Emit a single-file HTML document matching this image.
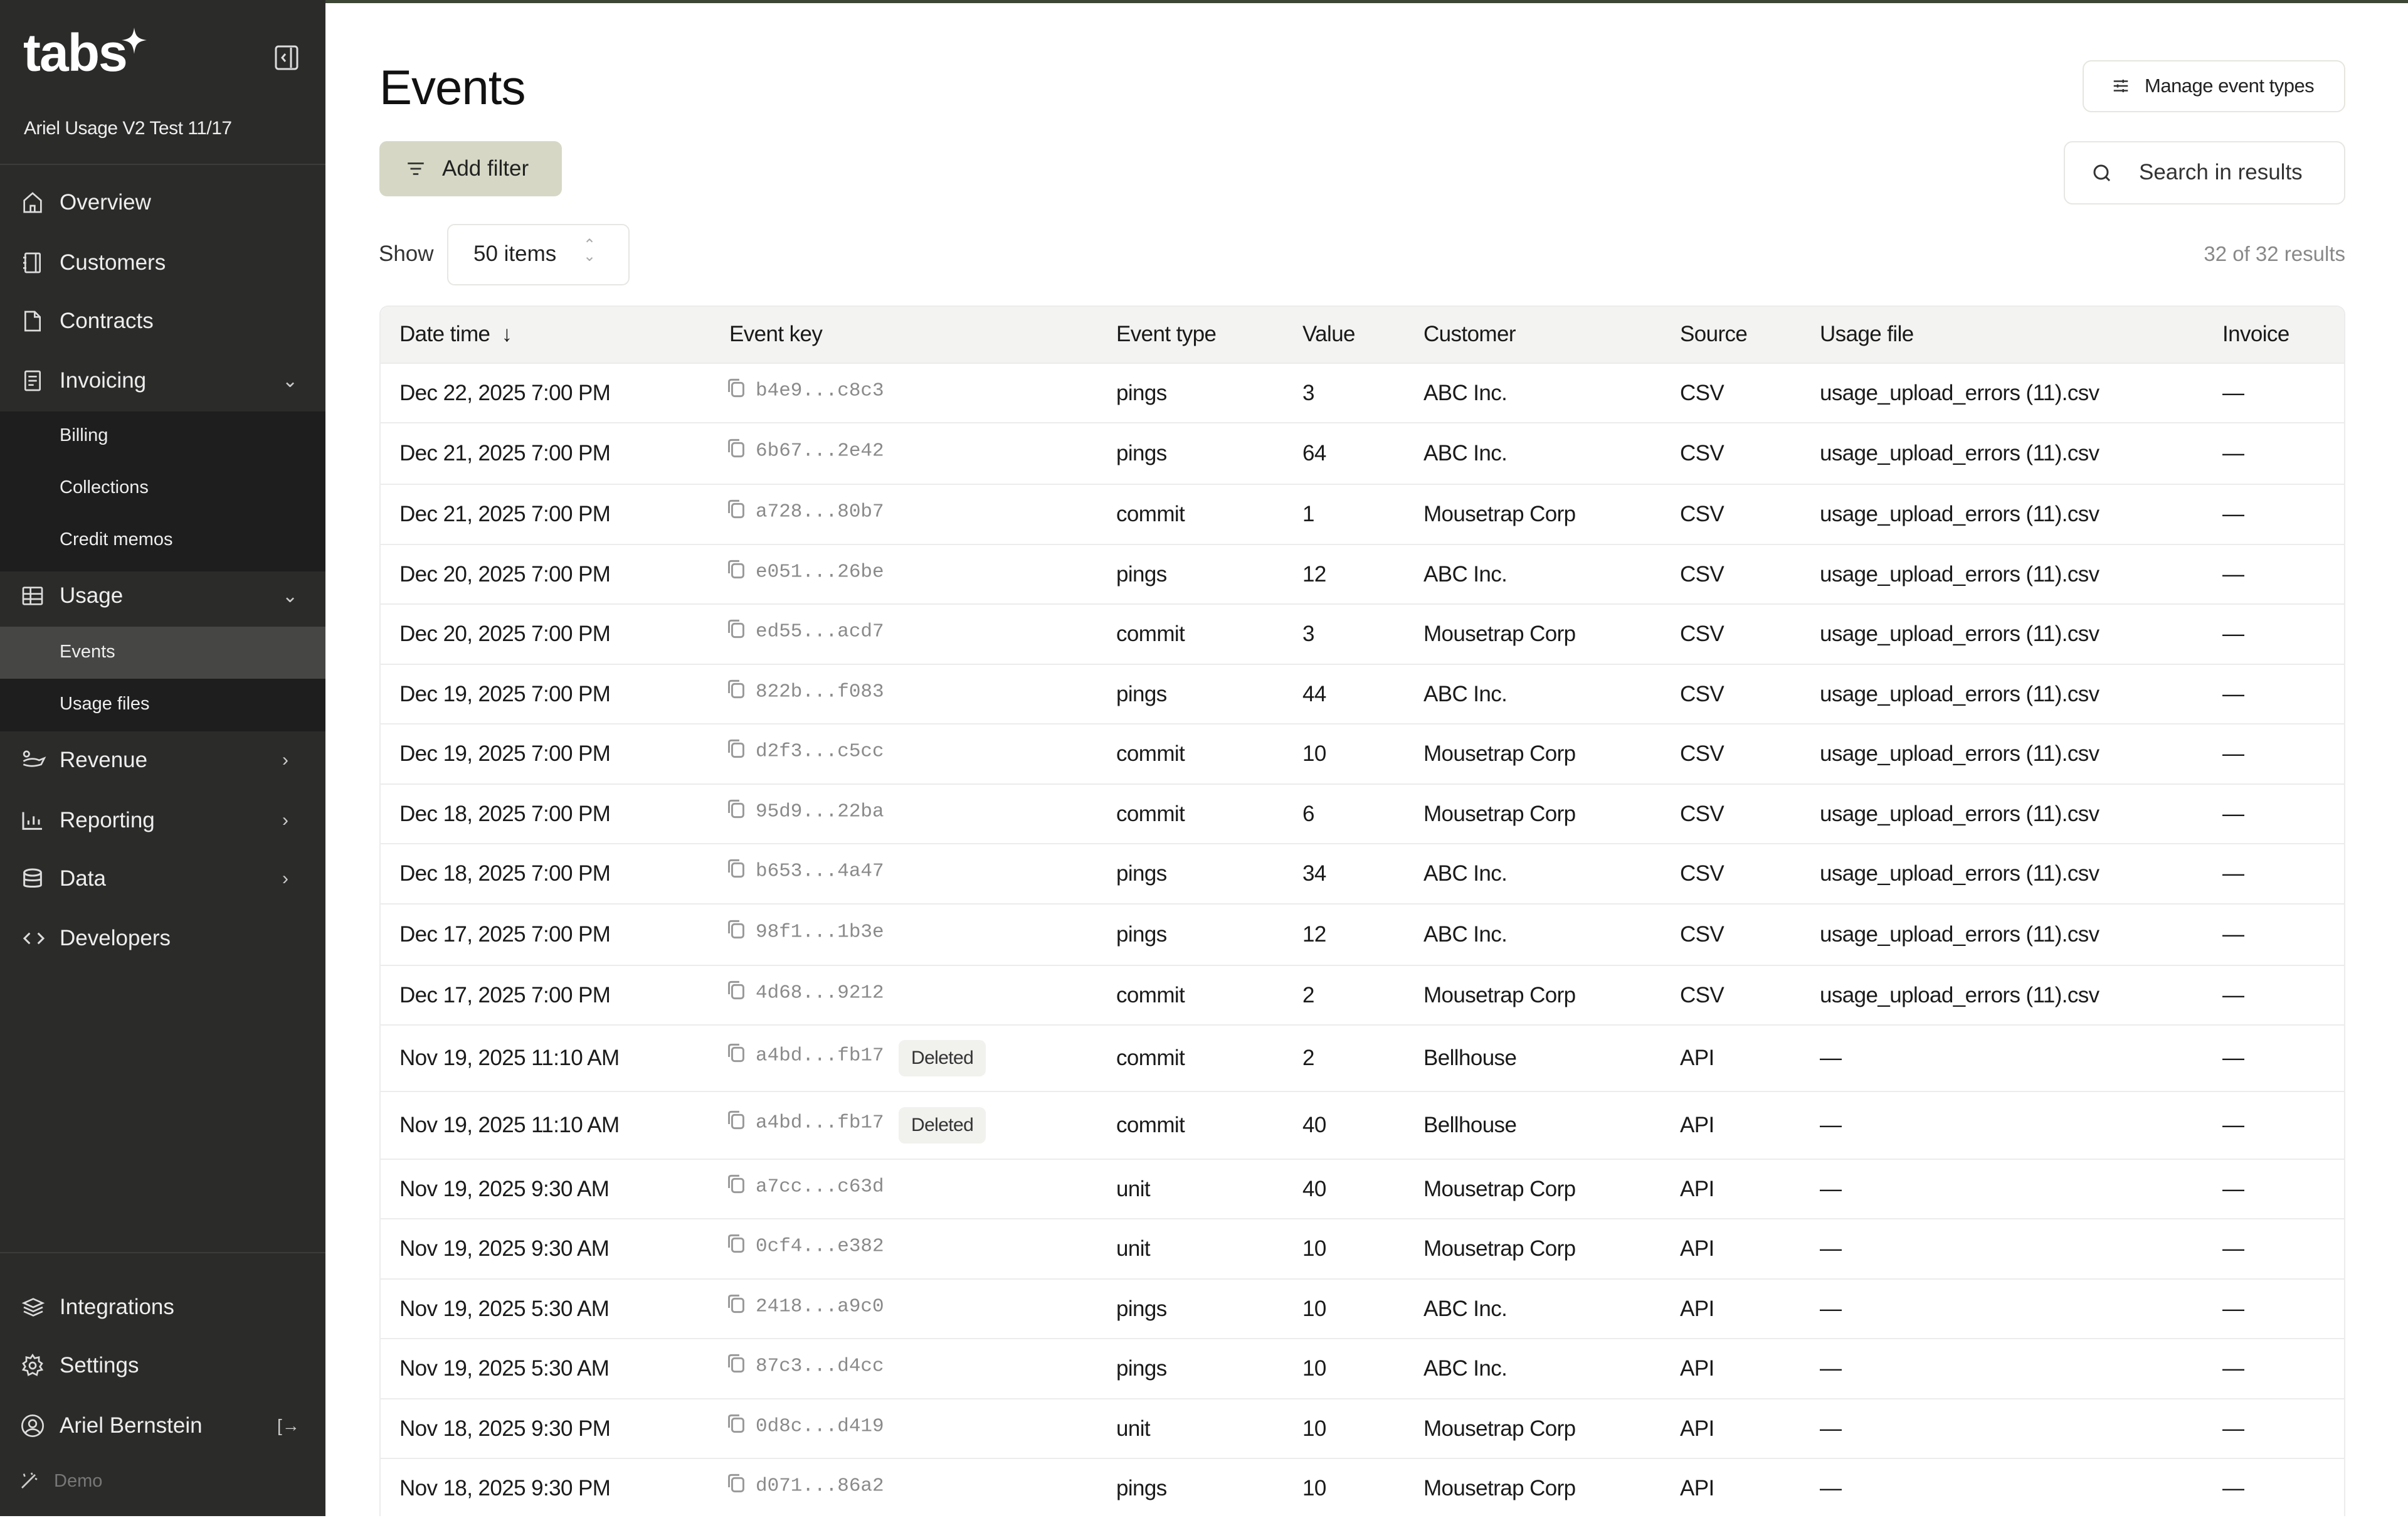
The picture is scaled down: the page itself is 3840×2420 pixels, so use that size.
<!DOCTYPE html>
<html><head><meta charset="utf-8"><style>
*{margin:0;padding:0;box-sizing:border-box}
body{width:3840px;height:2417px;overflow:hidden;background:#fff;font-family:"Liberation Sans",sans-serif;position:relative;color:#1a1a1a}
.a{position:absolute}
#sb{left:0;top:0;width:519px;height:2417px;background:#2b2b2a;color:#ececec}
.nav{position:absolute;left:0;width:519px;height:90px;display:flex;align-items:center;font-size:35px;color:#eeeeee}
.nav svg{position:absolute;left:32px}
.nav span{position:absolute;left:95px}
.nav .chev{position:absolute;left:450px;font-size:30px;color:#ccc}
.sub{position:absolute;left:95px;font-size:29px;color:#eee}
.row{position:absolute;left:605px;width:3135px;border-top:2px solid #ececec;font-size:35px;letter-spacing:-0.6px}
.row div{position:absolute;top:50%;transform:translateY(-50%);white-space:nowrap}
.key{font-family:"Liberation Mono",monospace;font-size:31px;color:#8a8a8a;letter-spacing:0}
.badge{background:#f1f1ee;border-radius:10px;padding:12px 20px;font-size:30px;color:#333}
</style></head><body>
<div class="a" style="left:0;top:0;width:3840px;height:5px;background:#3d4535"></div>
<div id="sb" class="a">
  <div class="a" style="left:37px;top:36px;font-size:84px;font-weight:bold;color:#fff;letter-spacing:-2px">tabs</div>
  <svg class="a" style="left:192px;top:42px" width="44" height="52" viewBox="0 0 44 52"><path d="M22 2 C24 16 28 20 42 22 C28 24 24 28 22 44 C20 28 16 24 2 22 C16 20 20 16 22 2Z" fill="#fff"/></svg>
  <svg class="a" style="left:438px;top:72px" width="38" height="40" viewBox="0 0 38 40"><rect x="2" y="2" width="34" height="36" rx="4" fill="none" stroke="#ddd" stroke-width="3"/><line x1="26" y1="4" x2="26" y2="36" stroke="#ddd" stroke-width="3"/><path d="M17 14 L12 20 L17 26" fill="none" stroke="#ddd" stroke-width="3"/></svg>
  <div class="a" style="left:38px;top:188px;font-size:30px;color:#eee;letter-spacing:-0.5px">Ariel Usage V2 Test 11/17</div>
  <div class="a" style="left:0;top:261px;width:519px;height:2px;background:#3c3c3b"></div>

  <div class="nav" style="top:278px"><svg width="40" height="40" viewBox="0 0 24 24" fill="none" stroke="#ddd" stroke-width="1.6"><path d="M4 10 L12 3 L20 10 V21 H4Z M10 21 V15 H14 V21"/></svg><span>Overview</span></div>
  <div class="nav" style="top:374px"><svg width="40" height="40" viewBox="0 0 24 24" fill="none" stroke="#ddd" stroke-width="1.6"><rect x="5" y="3" width="14" height="18" rx="1"/><path d="M15 3 V21 M3 7 H6 M3 12 H6 M3 17 H6"/></svg><span>Customers</span></div>
  <div class="nav" style="top:467px"><svg width="40" height="40" viewBox="0 0 24 24" fill="none" stroke="#ddd" stroke-width="1.6"><path d="M5 3 H14 L19 8 V21 H5Z M14 3 V8 H19"/></svg><span>Contracts</span></div>
  <div class="nav" style="top:562px"><svg width="40" height="40" viewBox="0 0 24 24" fill="none" stroke="#ddd" stroke-width="1.6"><rect x="5" y="3" width="14" height="18" rx="1"/><path d="M8 8 H16 M8 12 H16 M8 16 H13"/></svg><span>Invoicing</span><div class="chev">⌄</div></div>
  <div class="a" style="left:0;top:656px;width:519px;height:255px;background:#1e1e1e"></div>
  <div class="sub" style="top:678px">Billing</div>
  <div class="sub" style="top:761px">Collections</div>
  <div class="sub" style="top:844px">Credit memos</div>
  <div class="nav" style="top:905px"><svg width="40" height="40" viewBox="0 0 24 24" fill="none" stroke="#ddd" stroke-width="1.6"><rect x="3" y="4" width="18" height="16" rx="1"/><path d="M3 10 H21 M3 15 H21 M10 4 V20"/></svg><span>Usage</span><div class="chev">⌄</div></div>
  <div class="a" style="left:0;top:999px;width:519px;height:167px;background:#1e1e1e"></div>
  <div class="a" style="left:0;top:999px;width:519px;height:83px;background:#464645"></div>
  <div class="sub" style="top:1023px">Events</div>
  <div class="sub" style="top:1106px">Usage files</div>
  <div class="nav" style="top:1167px"><svg width="44" height="40" viewBox="0 0 26 24" fill="none" stroke="#ddd" stroke-width="1.6"><circle cx="6" cy="6" r="2.5"/><path d="M3 13 C8 10 14 10 18 12 L23 10 L20 16 C14 18 8 18 3 16"/></svg><span>Revenue</span><div class="chev">›</div></div>
  <div class="nav" style="top:1263px"><svg width="40" height="40" viewBox="0 0 24 24" fill="none" stroke="#ddd" stroke-width="1.8"><path d="M3 4 V20 H21 M8 16 V12 M13 16 V8 M18 16 V11"/></svg><span>Reporting</span><div class="chev">›</div></div>
  <div class="nav" style="top:1356px"><svg width="40" height="40" viewBox="0 0 24 24" fill="none" stroke="#ddd" stroke-width="1.8"><ellipse cx="12" cy="6" rx="8" ry="3"/><path d="M4 6 V18 C4 20 20 20 20 18 V6 M4 12 C4 14 20 14 20 12"/></svg><span>Data</span><div class="chev">›</div></div>
  <div class="nav" style="top:1451px"><svg width="44" height="40" viewBox="0 0 24 24" fill="none" stroke="#ddd" stroke-width="1.8"><path d="M8 7 L3 12 L8 17 M16 7 L21 12 L16 17"/></svg><span>Developers</span></div>
  <div class="a" style="left:0;top:1996px;width:519px;height:2px;background:#3c3c3b"></div>
  <div class="nav" style="top:2039px"><svg width="42" height="40" viewBox="0 0 24 24" fill="none" stroke="#ddd" stroke-width="1.6"><path d="M12 4 L21 8 L12 12 L3 8Z M3 12 L12 16 L21 12 M3 16 L12 20 L21 16"/></svg><span>Integrations</span></div>
  <div class="nav" style="top:2132px"><svg width="40" height="40" viewBox="0 0 24 24" fill="none" stroke="#ddd" stroke-width="1.6"><circle cx="12" cy="12" r="3"/><path d="M12 2 L14 5 L18 4 L18 8 L21 10 L19 13 L21 16 L17 17 L16 21 L12 19 L8 21 L7 17 L3 16 L5 13 L3 10 L6 8 L6 4 L10 5Z"/></svg><span>Settings</span></div>
  <div class="nav" style="top:2228px"><svg width="40" height="40" viewBox="0 0 24 24" fill="none" stroke="#ddd" stroke-width="1.6"><circle cx="12" cy="12" r="10"/><circle cx="12" cy="10" r="3.5"/><path d="M5 19 C8 14 16 14 19 19"/></svg><span>Ariel Bernstein</span><div class="chev" style="left:442px;font-size:28px">[→</div></div>
  <svg class="a" style="left:28px;top:2342px" width="38" height="36" viewBox="0 0 24 24" fill="none" stroke="#ccc" stroke-width="1.8"><path d="M4 20 L18 6 M14 4 L15 6 M18 10 L20 11 M6 5 L7 8"/></svg>
  <div class="a" style="left:86px;top:2345px;font-size:29px;color:#777">Demo</div>
</div>

<div class="a" style="left:605px;top:94px;font-size:78px;font-weight:500;color:#111;letter-spacing:-1px">Events</div>
<div class="a" style="left:3321px;top:96px;width:419px;height:83px;border:2px solid #e6e6df;border-radius:14px"></div>
<svg class="a" style="left:3366px;top:122px" width="32" height="30" viewBox="0 0 24 24" fill="none" stroke="#333" stroke-width="2"><path d="M3 6 H21 M3 12 H21 M3 18 H21 M15 4 V8 M8 10 V14 M15 16 V20"/></svg>
<div class="a" style="left:3420px;top:119px;font-size:31px;color:#222;letter-spacing:-0.5px">Manage event types</div>

<div class="a" style="left:605px;top:225px;width:291px;height:88px;background:#d6d8c5;border-radius:12px"></div>
<svg class="a" style="left:645px;top:252px" width="36" height="34" viewBox="0 0 24 24" fill="none" stroke="#333" stroke-width="2"><path d="M3 6 H21 M6 12 H18 M9 18 H15"/></svg>
<div class="a" style="left:705px;top:249px;font-size:35px;color:#222">Add filter</div>

<div class="a" style="left:3291px;top:225px;width:449px;height:101px;border:2px solid #e6e6e3;border-radius:14px"></div>
<svg class="a" style="left:3334px;top:258px" width="36" height="36" viewBox="0 0 24 24" fill="none" stroke="#333" stroke-width="2"><circle cx="11" cy="11" r="7"/><path d="M16 16 L20 20"/></svg>
<div class="a" style="left:3411px;top:255px;font-size:35px;color:#333">Search in results</div>

<div class="a" style="left:604px;top:385px;font-size:35px;color:#333">Show</div>
<div class="a" style="left:713px;top:357px;width:291px;height:98px;border:2px solid #e6e6e3;border-radius:12px"></div>
<div class="a" style="left:755px;top:385px;font-size:35px;color:#222">50 items</div>
<div class="a" style="left:930px;top:382px;font-size:24px;color:#aaa;line-height:18px">⌃<br>⌄</div>
<div class="a" style="left:3400px;top:386px;width:340px;text-align:right;font-size:33px;color:#888">32 of 32 results</div>

<div class="a" style="left:605px;top:487px;width:3135px;height:1930px;border:2px solid #ececec;border-bottom:none;border-radius:14px 14px 0 0;overflow:hidden">
 <div class="a" style="left:0;top:0;width:3135px;height:91px;background:#f3f3f1"></div>
</div>
<div class="row" style="top:487px;height:91px;border-top:none;font-weight:500">
 <div style="left:32px">Date time &nbsp;↓</div><div style="left:558px">Event key</div><div style="left:1175px">Event type</div><div style="left:1472px">Value</div><div style="left:1665px">Customer</div><div style="left:2074px">Source</div><div style="left:2297px">Usage file</div><div style="left:2939px">Invoice</div>
</div>

<div id="rows"></div>
<script>
var b=[578,673,771,867,962,1058,1153,1249,1344,1440,1538,1633,1739,1847,1942,2038,2133,2229,2324,2420];
var d=[
["Dec 22, 2025 7:00 PM","b4e9...c8c3","pings","3","ABC Inc.","CSV",1],
["Dec 21, 2025 7:00 PM","6b67...2e42","pings","64","ABC Inc.","CSV",1],
["Dec 21, 2025 7:00 PM","a728...80b7","commit","1","Mousetrap Corp","CSV",1],
["Dec 20, 2025 7:00 PM","e051...26be","pings","12","ABC Inc.","CSV",1],
["Dec 20, 2025 7:00 PM","ed55...acd7","commit","3","Mousetrap Corp","CSV",1],
["Dec 19, 2025 7:00 PM","822b...f083","pings","44","ABC Inc.","CSV",1],
["Dec 19, 2025 7:00 PM","d2f3...c5cc","commit","10","Mousetrap Corp","CSV",1],
["Dec 18, 2025 7:00 PM","95d9...22ba","commit","6","Mousetrap Corp","CSV",1],
["Dec 18, 2025 7:00 PM","b653...4a47","pings","34","ABC Inc.","CSV",1],
["Dec 17, 2025 7:00 PM","98f1...1b3e","pings","12","ABC Inc.","CSV",1],
["Dec 17, 2025 7:00 PM","4d68...9212","commit","2","Mousetrap Corp","CSV",1],
["Nov 19, 2025 11:10 AM","a4bd...fb17","commit","2","Bellhouse","API",0,1],
["Nov 19, 2025 11:10 AM","a4bd...fb17","commit","40","Bellhouse","API",0,1],
["Nov 19, 2025 9:30 AM","a7cc...c63d","unit","40","Mousetrap Corp","API",0],
["Nov 19, 2025 9:30 AM","0cf4...e382","unit","10","Mousetrap Corp","API",0],
["Nov 19, 2025 5:30 AM","2418...a9c0","pings","10","ABC Inc.","API",0],
["Nov 19, 2025 5:30 AM","87c3...d4cc","pings","10","ABC Inc.","API",0],
["Nov 18, 2025 9:30 PM","0d8c...d419","unit","10","Mousetrap Corp","API",0],
["Nov 18, 2025 9:30 PM","d071...86a2","pings","10","Mousetrap Corp","API",0]];
var copy='<svg width="34" height="36" viewBox="0 0 20 22" fill="none" stroke="#999" stroke-width="1.8"><rect x="6" y="6" width="11" height="13" rx="2.5"/><path d="M3 15 V5 C3 3.5 4 3 5.5 3 H13"/></svg>';
var h='';
for(var i=0;i<d.length;i++){var r=d[i];var t=b[i],hh=b[i+1]-b[i];
h+='<div class="row" style="top:'+t+'px;height:'+hh+'px"><div style="left:552px;margin-top:-4px">'+copy+'</div><div style="left:32px">'+r[0]+'</div><div class="key" style="left:600px;margin-top:-4px">'+r[1]+'</div>'+(r[7]?'<div class="badge" style="left:828px">Deleted</div>':'')+'<div style="left:1175px">'+r[2]+'</div><div style="left:1472px">'+r[3]+'</div><div style="left:1665px">'+r[4]+'</div><div style="left:2074px">'+r[5]+'</div><div style="left:2297px">'+(r[6]?'usage_upload_errors (11).csv':'—')+'</div><div style="left:2939px">—</div></div>';}
document.getElementById('rows').innerHTML=h;
</script>
</body></html>
